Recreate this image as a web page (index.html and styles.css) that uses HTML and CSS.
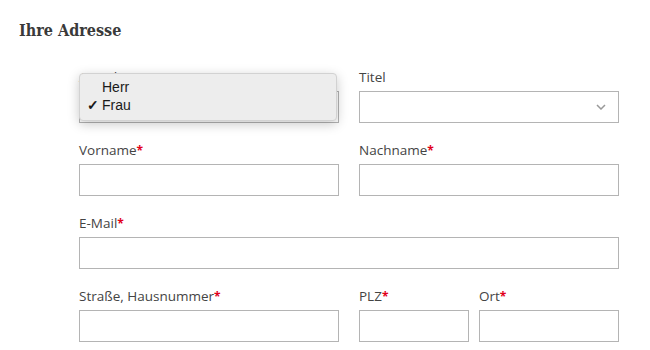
FILE: index.html
```html
<!DOCTYPE html>
<html lang="de">
<head>
    <meta charset="UTF-8">
    <meta name="viewport" content="width=device-width, initial-scale=1.0">
    <title>Ihre Adresse</title>
    <link rel="stylesheet" href="styles.css">
</head>
<body>
    <h2 class="section-title">Ihre Adresse</h2>

    <form class="address-form">
        <!-- Anrede / Titel -->
        <div class="form-row">
            <div class="field">
                <label class="field-label" for="salutation">Anrede</label>
                <div class="select-wrap">
                    <select class="field-input" id="salutation">
                        <option>Herr</option>
                        <option selected>Frau</option>
                    </select>
                    <ul class="select-menu">
                        <li>Herr</li>
                        <li class="is-checked">Frau</li>
                    </ul>
                </div>
            </div>
            <div class="field">
                <label class="field-label" for="title">Titel</label>
                <div class="select-wrap">
                    <select class="field-input" id="title">
                        <option></option>
                    </select>
                    <svg class="chevron" viewBox="0 0 10 6"><path d="M1 1l4 4 4-4"/></svg>
                </div>
            </div>
        </div>

        <!-- Name -->
        <div class="form-row">
            <div class="field">
                <label class="field-label" for="firstname">Vorname<span class="req">*</span></label>
                <input class="field-input" type="text" id="firstname">
            </div>
            <div class="field">
                <label class="field-label" for="lastname">Nachname<span class="req">*</span></label>
                <input class="field-input" type="text" id="lastname">
            </div>
        </div>

        <!-- E-Mail -->
        <div class="form-row form-row--single">
            <div class="field">
                <label class="field-label" for="email">E-Mail<span class="req">*</span></label>
                <input class="field-input" type="email" id="email">
            </div>
        </div>

        <!-- Adresse -->
        <div class="form-row">
            <div class="field">
                <label class="field-label" for="street">Straße, Hausnummer<span class="req">*</span></label>
                <input class="field-input" type="text" id="street">
            </div>
            <div class="field-pair">
                <div class="field">
                    <label class="field-label" for="zip">PLZ<span class="req">*</span></label>
                    <input class="field-input" type="text" id="zip">
                </div>
                <div class="field">
                    <label class="field-label" for="city">Ort<span class="req">*</span></label>
                    <input class="field-input" type="text" id="city">
                </div>
            </div>
        </div>
    </form>
</body>
</html>
```

FILE: styles.css
```css
body {
    margin: 0;
    font-family: "Open Sans", sans-serif;
    color: #444;
    background-color: #fff;
}
.section-title {
    margin: 20px 0 0 19px;
    font-family: "DejaVu Serif", serif;
    font-stretch: condensed;
    font-weight: bold;
    font-size: 16px;
    line-height: 22px;
    color: #3a3a3a;
}
.address-form {
    width: 540px;
    margin: 26px 0 0 79px;
    display: flex;
    flex-direction: column;
    gap: 18px;
}
.form-row {
    display: grid;
    grid-template-columns: 1fr 1fr;
    gap: 20px;
}
.form-row--single {
    grid-template-columns: 1fr;
}
.field-pair {
    display: grid;
    grid-template-columns: 110px 1fr;
    gap: 10px;
}
.field-label {
    display: block;
    height: 18px;
    font-size: 13.5px;
    line-height: 18px;
    margin-bottom: 5px;
}
.req {
    color: #e2001a;
    font-weight: bold;
    font-size: 12px;
    line-height: 0;
}
.field-input {
    display: block;
    width: 100%;
    height: 32px;
    box-sizing: border-box;
    margin: 0;
    padding: 0 10px;
    border: 1px solid #b4b4b4;
    border-radius: 0;
    background-color: #fff;
    font: inherit;
    color: #333;
    -webkit-appearance: none;
    appearance: none;
}
.select-wrap {
    position: relative;
}
.chevron {
    position: absolute;
    right: 13px;
    top: 13px;
    width: 10px;
    height: 6px;
    fill: none;
    stroke: #999;
    stroke-width: 1.5;
}
.select-menu {
    position: absolute;
    left: 0;
    top: -18px;
    width: 256px;
    margin: 0;
    padding: 4px 0 6px;
    list-style: none;
    background-color: #ededed;
    border: 1px solid #d2d2d2;
    border-radius: 4px;
    box-shadow: 0 3px 12px rgba(0, 0, 0, 0.22);
    font: 14px/18px "Liberation Sans", Arial, sans-serif;
    color: #1a1a1a;
}
.select-menu li {
    position: relative;
    padding-left: 22px;
}
.select-menu .is-checked::before {
    content: "\2713";
    position: absolute;
    left: 7px;
    font-size: 14px;
    font-weight: bold;
}
```
